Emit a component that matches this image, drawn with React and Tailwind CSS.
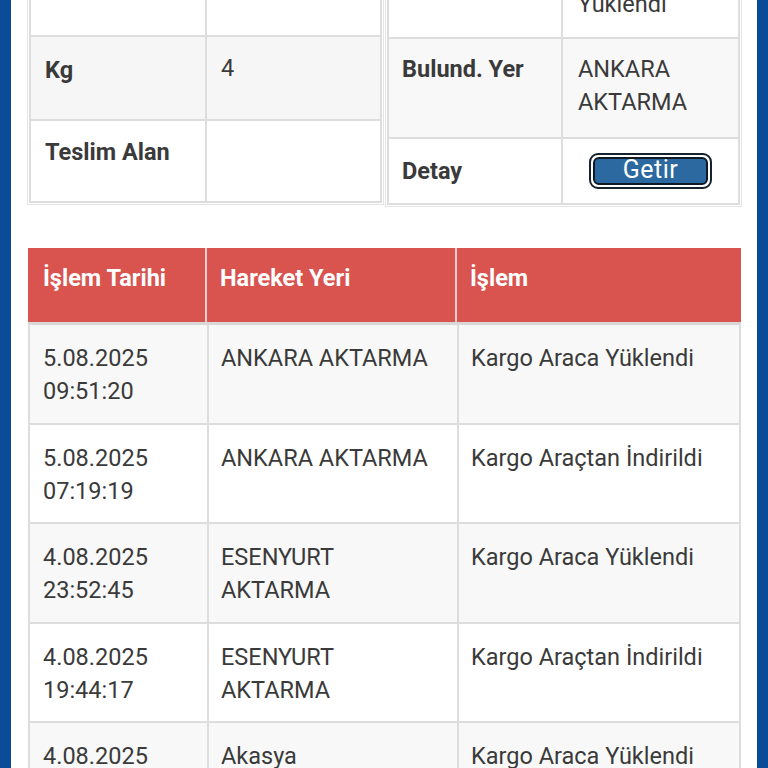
import React from 'react';

const movements = [
  { date: '5.08.2025', time: '09:51:20', place: 'ANKARA AKTARMA', action: 'Kargo Araca Yüklendi' },
  { date: '5.08.2025', time: '07:19:19', place: 'ANKARA AKTARMA', action: 'Kargo Araçtan İndirildi' },
  { date: '4.08.2025', time: '23:52:45', place: 'ESENYURT AKTARMA', action: 'Kargo Araca Yüklendi' },
  { date: '4.08.2025', time: '19:44:17', place: 'ESENYURT AKTARMA', action: 'Kargo Araçtan İndirildi' },
  { date: '4.08.2025', time: '17:02:11', place: 'Akasya', action: 'Kargo Araca Yüklendi' },
];

const Panel = ({ cols, children }) => (
  <div className="border border-[#e4e4e4] bg-white p-px">
    <div className={`border-2 border-[#dddddd] ${cols}`}>{children}</div>
  </div>
);

export default function App() {
  return (
    <div className="flex h-[768px] overflow-hidden bg-white font-['Roboto','Liberation_Sans',sans-serif] text-[23.5px] leading-[33px] text-[#3a3a3a]">
      <div className="w-[11px] shrink-0 bg-[#0b4c98]" />

      <div className="min-w-0 flex-1 pl-[16px] pr-[15px]">
        {/* summary panels, page is scrolled so the first row is cut */}
        <div className="-mt-[66px] grid grid-cols-2 items-start gap-px">
          <Panel cols="grid grid-cols-[174px_1fr]">
            <div className="h-[97px]" />
            <div className="h-[97px] border-l-2 border-[#dddddd]" />

            <div className="h-[84px] border-t-2 border-[#dddddd] bg-[#f6f6f6] pl-[14px] pt-[17px] font-bold">Kg</div>
            <div className="h-[84px] border-l-2 border-t-2 border-[#dddddd] bg-[#f6f6f6] pl-[14px] pt-[15px]">4</div>

            <div className="h-[82px] border-t-2 border-[#dddddd] pl-[14px] pt-[15px] font-bold">Teslim Alan</div>
            <div className="h-[82px] border-l-2 border-t-2 border-[#dddddd]" />
          </Panel>

          <Panel cols="grid grid-cols-[172px_1fr]">
            <div className="h-[99px]" />
            <div className="h-[99px] border-l-2 border-[#dddddd] pl-[15px] pt-[17px]">Kargo Araca Yüklendi</div>

            <div className="h-[100px] border-t-2 border-[#dddddd] bg-[#f8f8f8] pl-[13px] pt-[14px] font-bold">Bulund. Yer</div>
            <div className="h-[100px] border-l-2 border-t-2 border-[#dddddd] bg-[#f8f8f8] pl-[15px] pt-[14px]">ANKARA AKTARMA</div>

            <div className="flex h-[66px] items-center border-t-2 border-[#dddddd] pl-[13px] font-bold">Detay</div>
            <div className="flex h-[66px] items-center justify-center border-l-2 border-t-2 border-[#dddddd]">
              <button className="h-[36px] w-[123px] rounded-[9px] border-2 border-[#17222d] bg-white p-[2px]">
                <span className="flex h-full items-center justify-center overflow-hidden rounded-[6px] border-2 border-[#0f1a24] bg-[#2c69a0] text-[25px] leading-none tracking-[0.02em] text-white">
                  <span className="-mt-[4px]">Getir</span>
                </span>
              </button>
            </div>
          </Panel>
        </div>

        {/* movements table */}
        <div className="mx-px mt-[41px]">
          <div className="grid h-[77px] grid-cols-[177px_250px_1fr] border-b-[3px] border-[#d8d8d8] bg-[#d9534f] font-bold text-white">
            <div className="pl-[15px] pt-[14px]">İşlem Tarihi</div>
            <div className="border-l-2 border-[#f1cfce] pl-[13px] pt-[14px]">Hareket Yeri</div>
            <div className="border-l-2 border-[#f1cfce] pl-[13px] pt-[14px]">İşlem</div>
          </div>

          {movements.map((m, i) => (
            <div
              key={i}
              className={`grid h-[99.6px] grid-cols-[177px_250px_1fr] border-x-2 border-b-2 border-[#dddddd] ${
                i % 2 === 0 ? 'bg-[#f8f8f8]' : 'bg-white'
              }`}
            >
              <div className="pl-[13px] pt-[17px]">
                <div>{m.date}</div>
                <div>{m.time}</div>
              </div>
              <div className="border-l-2 border-[#dddddd] pl-[12px] pr-[10px] pt-[17px]">{m.place}</div>
              <div className="border-l-2 border-[#dddddd] pl-[12px] pt-[17px]">{m.action}</div>
            </div>
          ))}
        </div>
      </div>

      <div className="w-[11px] shrink-0 bg-[#0b4c98]" />
    </div>
  );
}
